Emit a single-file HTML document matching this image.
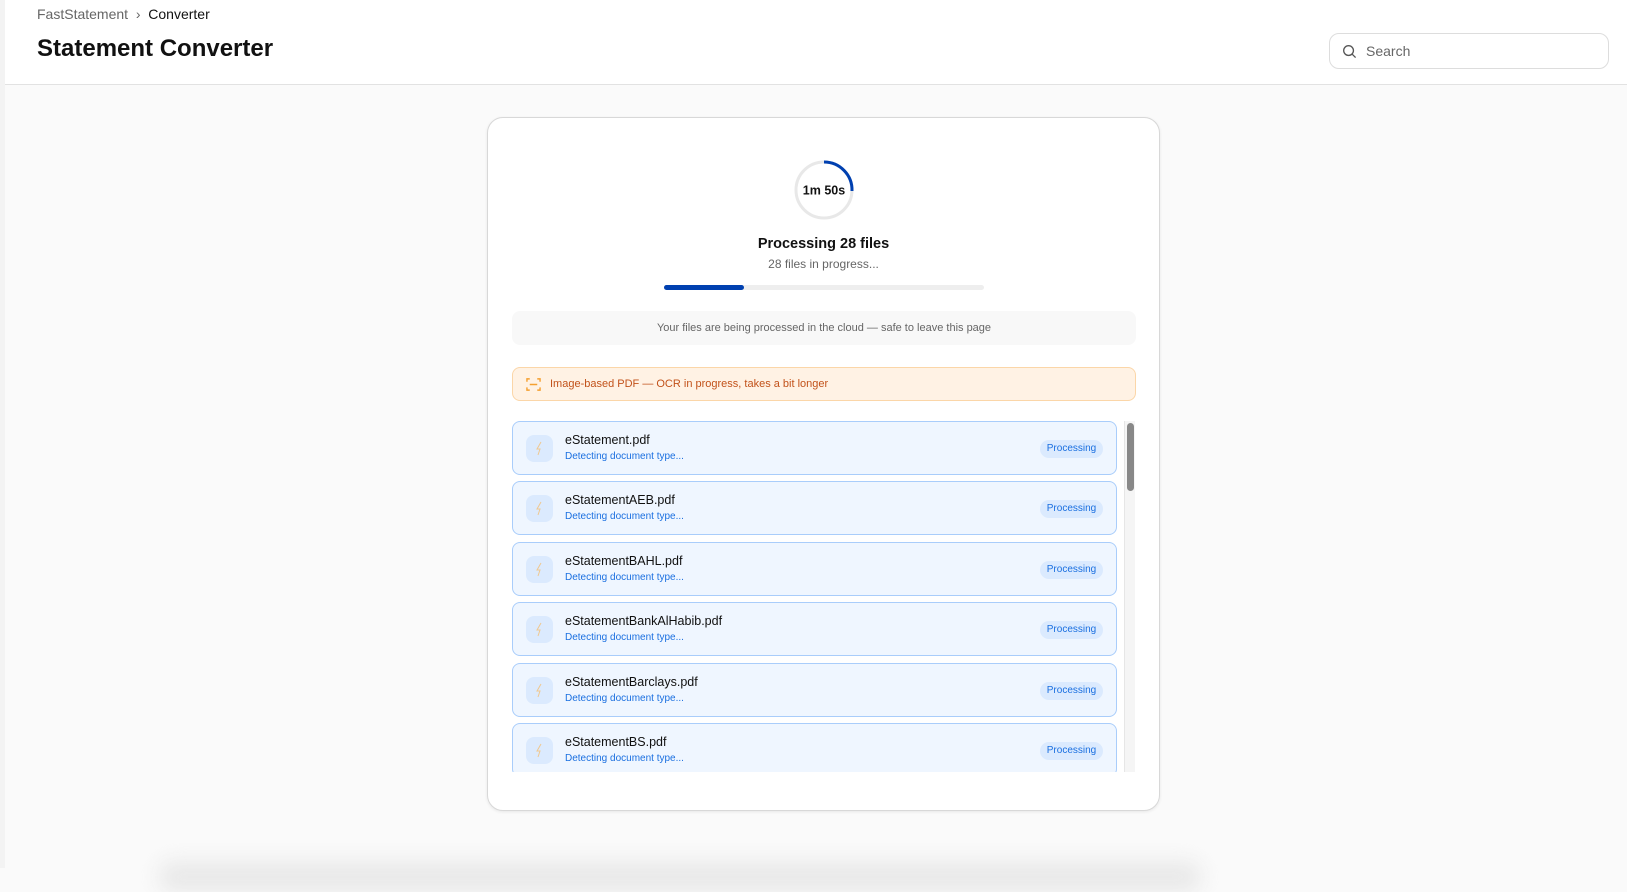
<!DOCTYPE html>
<html><head><meta charset="utf-8"><style>
*{box-sizing:border-box;margin:0;padding:0}
body{width:1627px;height:868px;overflow:hidden;background:#fafafa;font-family:"Liberation Sans",sans-serif;position:relative;color:#111}
.strip{position:absolute;left:0;top:0;width:5px;height:868px;background:#f3f3f3}
.header{position:absolute;left:5px;top:0;right:0;height:85px;background:#fff;border-bottom:1px solid #e2e2e2}
.bc{position:absolute;left:32px;top:6px;font-size:14px;color:#666}
.bc b{font-weight:normal;color:#111}
.title{position:absolute;left:32px;top:35px;font-size:24px;font-weight:bold;color:#111}
.search{position:absolute;left:1329px;top:33px;width:280px;height:36px;border:1px solid #ddd;border-radius:10px;background:#fff}
.search span{position:absolute;left:36px;top:9px;font-size:14px;color:#666}
.card{position:absolute;left:487px;top:117px;width:673px;height:694px;background:#fff;border:1px solid #d8d8d8;border-radius:16px;box-shadow:0 1px 3px rgba(0,0,0,.08)}
.c{position:absolute;text-align:center;left:0;width:100%}
.bar{position:absolute;left:176px;top:167px;width:320px;height:5px;background:#eee;border-radius:3px}
.bar i{position:absolute;left:0;top:0;height:5px;width:80px;background:#0040b0;border-radius:3px}
.info{position:absolute;left:24px;top:193px;width:624px;height:34px;background:#f8f8f8;border-radius:8px;font-size:11px;color:#666;text-align:center;line-height:34px}
.warn{position:absolute;left:24px;top:249px;width:624px;height:34px;background:#fff2e4;border:1px solid #fbd6a8;border-radius:8px;font-size:11px;color:#c2521a;line-height:32px;padding-left:37px}
.list{position:absolute;left:24px;top:303px;width:624px;height:351px;overflow:hidden}
.item{position:absolute;left:0;width:605px;height:54px;background:#eff6ff;border:1px solid #a9cdfb;border-radius:8px}
.ic{position:absolute;left:13px;top:13px;width:27px;height:27px;background:#dbeafe;border-radius:8px}
.ic svg{position:absolute;left:8px;top:6px}
.fn{position:absolute;left:52px;top:11px;font-size:12.5px;color:#111}
.st{position:absolute;left:52px;top:29px;font-size:10px;color:#1a6fe0}
.bd{position:absolute;left:527px;top:18px;width:63px;height:18px;background:#dbeafe;border-radius:9px;font-size:10px;color:#1a6fe0;text-align:center;line-height:18px}
.sb{position:absolute;left:612px;top:0;width:11px;height:351px;background:#f5f5f5;border-left:1px solid #e6e6e6}
.sb i{position:absolute;left:2px;top:2px;width:7px;height:68px;background:#888;border-radius:4px}
.shadow{position:absolute;left:160px;top:862px;width:1040px;height:30px;background:#e8e8e8;filter:blur(10px);border-radius:10px}
</style></head><body>
<div class="strip"></div>
<div class="header">
<div class="bc">FastStatement &nbsp;›&nbsp; <b>Converter</b></div>
<div class="title">Statement Converter</div>
</div>
<div class="search"><svg style="position:absolute;left:12px;top:10px" width="15" height="15" viewBox="0 0 16 16"><circle cx="7" cy="7" r="5.2" fill="none" stroke="#555" stroke-width="1.4"/><path d="M11 11l3.5 3.5" stroke="#555" stroke-width="1.4"/></svg><span>Search</span></div>
<div class="card">
<svg style="position:absolute;left:306px;top:42px" width="60" height="60" viewBox="0 0 60 60"><circle cx="30" cy="30" r="28" fill="none" stroke="#e8e8e8" stroke-width="3"/><path d="M30 2 A28 28 0 0 1 58 31" fill="none" stroke="#0040b0" stroke-width="3"/><text x="30" y="34.5" text-anchor="middle" font-size="12.5" font-weight="bold" font-family="Liberation Sans,sans-serif" fill="#111">1m 50s</text></svg>
<div class="c" style="top:118px;font-size:14.5px;font-weight:bold">Processing 28 files</div>
<div class="c" style="top:139px;font-size:12px;color:#666">28 files in progress...</div>
<div class="bar"><i></i></div>
<div class="info">Your files are being processed in the cloud — safe to leave this page</div>
<div class="warn"><svg style="position:absolute;left:13px;top:9px" width="15" height="15" viewBox="0 0 16 16" fill="none" stroke="#f5a030" stroke-width="1.5"><path d="M1 5V2h3M12 2h3v3M15 11v3h-3M4 14H1v-3M4 8h8"/></svg>Image-based PDF — OCR in progress, takes a bit longer</div>
<div class="list">
<div class="item" style="top:0"><div class="ic"><svg width="11" height="15" viewBox="0 0 11 15"><path d="M7 1L3 8h3l-2 6" fill="none" stroke="#f0c890" stroke-width="1"/></svg></div><div class="fn">eStatement.pdf</div><div class="st">Detecting document type...</div><div class="bd">Processing</div></div>
<div class="item" style="top:60px"><div class="ic"><svg width="11" height="15" viewBox="0 0 11 15"><path d="M7 1L3 8h3l-2 6" fill="none" stroke="#f0c890" stroke-width="1"/></svg></div><div class="fn">eStatementAEB.pdf</div><div class="st">Detecting document type...</div><div class="bd">Processing</div></div>
<div class="item" style="top:121px"><div class="ic"><svg width="11" height="15" viewBox="0 0 11 15"><path d="M7 1L3 8h3l-2 6" fill="none" stroke="#f0c890" stroke-width="1"/></svg></div><div class="fn">eStatementBAHL.pdf</div><div class="st">Detecting document type...</div><div class="bd">Processing</div></div>
<div class="item" style="top:181px"><div class="ic"><svg width="11" height="15" viewBox="0 0 11 15"><path d="M7 1L3 8h3l-2 6" fill="none" stroke="#f0c890" stroke-width="1"/></svg></div><div class="fn">eStatementBankAlHabib.pdf</div><div class="st">Detecting document type...</div><div class="bd">Processing</div></div>
<div class="item" style="top:242px"><div class="ic"><svg width="11" height="15" viewBox="0 0 11 15"><path d="M7 1L3 8h3l-2 6" fill="none" stroke="#f0c890" stroke-width="1"/></svg></div><div class="fn">eStatementBarclays.pdf</div><div class="st">Detecting document type...</div><div class="bd">Processing</div></div>
<div class="item" style="top:302px"><div class="ic"><svg width="11" height="15" viewBox="0 0 11 15"><path d="M7 1L3 8h3l-2 6" fill="none" stroke="#f0c890" stroke-width="1"/></svg></div><div class="fn">eStatementBS.pdf</div><div class="st">Detecting document type...</div><div class="bd">Processing</div></div>
<div class="sb"><i></i></div>
</div>
</div>
<div class="shadow"></div>
</body></html>
